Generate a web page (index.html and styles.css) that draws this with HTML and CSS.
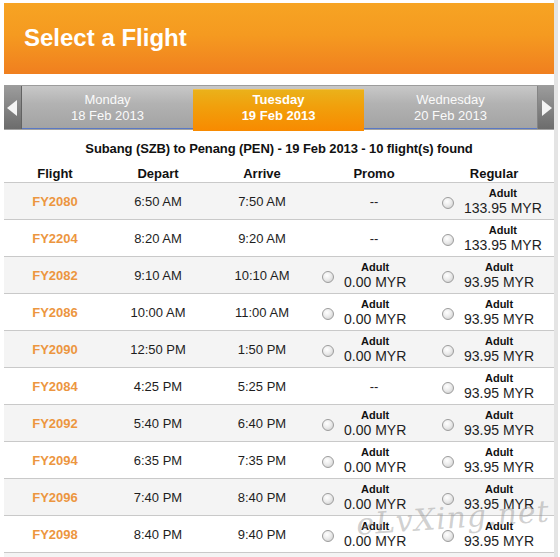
FILE: index.html
```html
<!DOCTYPE html>
<html>
<head>
<meta charset="utf-8">
<link rel="stylesheet" href="styles.css">
</head>
<body>
<div class="page">
  <div class="header"><h1 class="title">Select a Flight</h1></div>
  <div class="datebar">
    <div class="arrow arrow-left"><span class="tri tri-left"></span></div>
    <div class="tab"><span>Monday</span><span>18 Feb 2013</span></div>
    <div class="tab tab-active"><span>Tuesday</span><span>19 Feb 2013</span></div>
    <div class="tab tab-wide"><span>Wednesday</span><span>20 Feb 2013</span></div>
    <div class="arrow arrow-right"><span class="tri tri-right"></span></div>
  </div>
  <div class="route">Subang (SZB) to Penang (PEN) - 19 Feb 2013 - 10 flight(s) found</div>
  <div class="table">
    <div class="row head">
      <div class="cell">Flight</div><div class="cell">Depart</div><div class="cell">Arrive</div><div class="cell">Promo</div><div class="cell">Regular</div>
    </div>
    <div class="row odd">
      <div class="cell fno">FY2080</div><div class="cell">6:50 AM</div><div class="cell">7:50 AM</div>
      <div class="cell">--</div>
      <div class="cell fare"><span class="radio"></span><div class="price"><b>Adult</b><span>133.95 MYR</span></div></div>
    </div>
    <div class="row">
      <div class="cell fno">FY2204</div><div class="cell">8:20 AM</div><div class="cell">9:20 AM</div>
      <div class="cell">--</div>
      <div class="cell fare"><span class="radio"></span><div class="price"><b>Adult</b><span>133.95 MYR</span></div></div>
    </div>
    <div class="row odd">
      <div class="cell fno">FY2082</div><div class="cell">9:10 AM</div><div class="cell">10:10 AM</div>
      <div class="cell fare"><span class="radio"></span><div class="price"><b>Adult</b><span>0.00 MYR</span></div></div>
      <div class="cell fare"><span class="radio"></span><div class="price"><b>Adult</b><span>93.95 MYR</span></div></div>
    </div>
    <div class="row">
      <div class="cell fno">FY2086</div><div class="cell">10:00 AM</div><div class="cell">11:00 AM</div>
      <div class="cell fare"><span class="radio"></span><div class="price"><b>Adult</b><span>0.00 MYR</span></div></div>
      <div class="cell fare"><span class="radio"></span><div class="price"><b>Adult</b><span>93.95 MYR</span></div></div>
    </div>
    <div class="row odd">
      <div class="cell fno">FY2090</div><div class="cell">12:50 PM</div><div class="cell">1:50 PM</div>
      <div class="cell fare"><span class="radio"></span><div class="price"><b>Adult</b><span>0.00 MYR</span></div></div>
      <div class="cell fare"><span class="radio"></span><div class="price"><b>Adult</b><span>93.95 MYR</span></div></div>
    </div>
    <div class="row">
      <div class="cell fno">FY2084</div><div class="cell">4:25 PM</div><div class="cell">5:25 PM</div>
      <div class="cell">--</div>
      <div class="cell fare"><span class="radio"></span><div class="price"><b>Adult</b><span>93.95 MYR</span></div></div>
    </div>
    <div class="row odd">
      <div class="cell fno">FY2092</div><div class="cell">5:40 PM</div><div class="cell">6:40 PM</div>
      <div class="cell fare"><span class="radio"></span><div class="price"><b>Adult</b><span>0.00 MYR</span></div></div>
      <div class="cell fare"><span class="radio"></span><div class="price"><b>Adult</b><span>93.95 MYR</span></div></div>
    </div>
    <div class="row">
      <div class="cell fno">FY2094</div><div class="cell">6:35 PM</div><div class="cell">7:35 PM</div>
      <div class="cell fare"><span class="radio"></span><div class="price"><b>Adult</b><span>0.00 MYR</span></div></div>
      <div class="cell fare"><span class="radio"></span><div class="price"><b>Adult</b><span>93.95 MYR</span></div></div>
    </div>
    <div class="row odd">
      <div class="cell fno">FY2096</div><div class="cell">7:40 PM</div><div class="cell">8:40 PM</div>
      <div class="cell fare"><span class="radio"></span><div class="price"><b>Adult</b><span>0.00 MYR</span></div></div>
      <div class="cell fare"><span class="radio"></span><div class="price"><b>Adult</b><span>93.95 MYR</span></div></div>
    </div>
    <div class="row">
      <div class="cell fno">FY2098</div><div class="cell">8:40 PM</div><div class="cell">9:40 PM</div>
      <div class="cell fare"><span class="radio"></span><div class="price"><b>Adult</b><span>0.00 MYR</span></div></div>
      <div class="cell fare"><span class="radio"></span><div class="price"><b>Adult</b><span>93.95 MYR</span></div></div>
    </div>
    <div class="row odd tail"></div>
  </div>
  <div class="watermark">eLvXing.net</div>
</div>
</body>
</html>
```

FILE: styles.css
```css
html, body {
  margin: 0;
  padding: 0;
  background: #ffffff;
  overflow: hidden;
}
body {
  font-family: "Liberation Sans", Arial, sans-serif;
  color: #1e1e1e;
}
.page {
  position: relative;
  width: 554px;
  margin-left: 4px;
  padding-top: 3px;
  border-right: 4px solid #e4e4e4;
  height: 557px;
  box-sizing: border-box;
  overflow: hidden;
}
.header {
  height: 71px;
  background: linear-gradient(to bottom, #f7a423 0%, #f59a20 45%, #f07f1f 100%);
  display: flex;
  align-items: center;
  padding-left: 20px;
}
.title {
  margin: 0;
  color: #ffffff;
  font-size: 24px;
  font-weight: bold;
  padding-bottom: 2px;
}
.datebar {
  margin-top: 11px;
  height: 45px;
  display: flex;
  background: linear-gradient(to bottom, #c8c8c8 0%, #b2b2b2 40%, #a2a2a2 100%);
  border-top: 1px solid #9c9c9c;
  box-sizing: border-box;
}
.arrow {
  width: 18px;
  height: 43px;
  background: linear-gradient(to bottom, #9c9c9c 0%, #868686 45%, #6c6c6c 100%);
  display: flex;
  align-items: center;
  justify-content: center;
  box-sizing: border-box;
}
.arrow-left { border-right: 1px solid #626262; }
.arrow-right { width: 17px; border-left: 1px solid #848484; }
.tri {
  width: 0;
  height: 0;
  border-top: 8px solid transparent;
  border-bottom: 8px solid transparent;
}
.tri-left { border-right: 10px solid #f4f4f4; margin-right: 2px; }
.tri-right { border-left: 10px solid #f4f4f4; margin-left: 2px; }
.tab {
  width: 171px;
  height: 43px;
  display: flex;
  flex-direction: column;
  align-items: center;
  justify-content: center;
  color: #fafafa;
  font-size: 13px;
  line-height: 16px;
  border-bottom: 1px solid #5a78c4;
  box-sizing: border-box;
  padding-top: 1px;
}
.tab-wide { width: 173px; }
.tab-active {
  margin-top: 3px;
  height: 42px;
  border-bottom: none;
  background: linear-gradient(to bottom, #eab11a 0%, #f1a00c 40%, #f88a00 100%);
  border-top: 1px solid #f3c04a;
  font-weight: bold;
  color: #ffffff;
  padding-top: 0;
  padding-bottom: 5px;
}
.route {
  height: 35px;
  display: flex;
  align-items: center;
  justify-content: center;
  font-size: 13px;
  font-weight: bold;
  color: #111;
  padding-top: 1px;
  box-sizing: border-box;
  letter-spacing: -0.1px;
}
.table {
  display: flex;
  flex-direction: column;
}
.row {
  display: grid;
  grid-template-columns: 102px 104px 104px 120px 120px;
  height: 37px;
  border-bottom: 1px solid #c9c9c9;
  box-sizing: border-box;
  background: #ffffff;
}
.row.odd { background: #f4f4f4; }
.row.head {
  height: 18px;
  background: #ffffff;
  font-weight: bold;
}
.row.head .cell { font-size: 13px; color: #111; }
.row.tail { border-bottom: none; }
.cell {
  display: flex;
  align-items: center;
  justify-content: center;
  font-size: 13px;
}
.fno {
  color: #ec963f;
  font-weight: bold;
}
.fare {
  justify-content: flex-start;
  padding-left: 8px;
  gap: 10px;
}
.radio {
  width: 12px;
  height: 12px;
  border-radius: 50%;
  border: 1px solid #9c9c9c;
  background: radial-gradient(circle at 40% 35%, #ffffff 0%, #ececec 45%, #c8c8c8 100%);
  box-sizing: border-box;
  margin-top: 3px;
  flex: none;
}
.price {
  display: flex;
  flex-direction: column;
  align-items: center;
  line-height: 15px;
  padding-top: 1px;
}
.price b {
  font-size: 11px;
  line-height: 13px;
  color: #111;
}
.price span {
  font-size: 14px;
  line-height: 16px;
  color: #1e1e1e;
}
.watermark {
  position: absolute;
  left: 352px;
  top: 500px;
  font-family: "DejaVu Serif", serif;
  font-style: italic;
  font-size: 30px;
  letter-spacing: 1px;
  color: rgba(150, 150, 150, 0.45);
  transform: rotate(-4deg);
  pointer-events: none;
}
```
